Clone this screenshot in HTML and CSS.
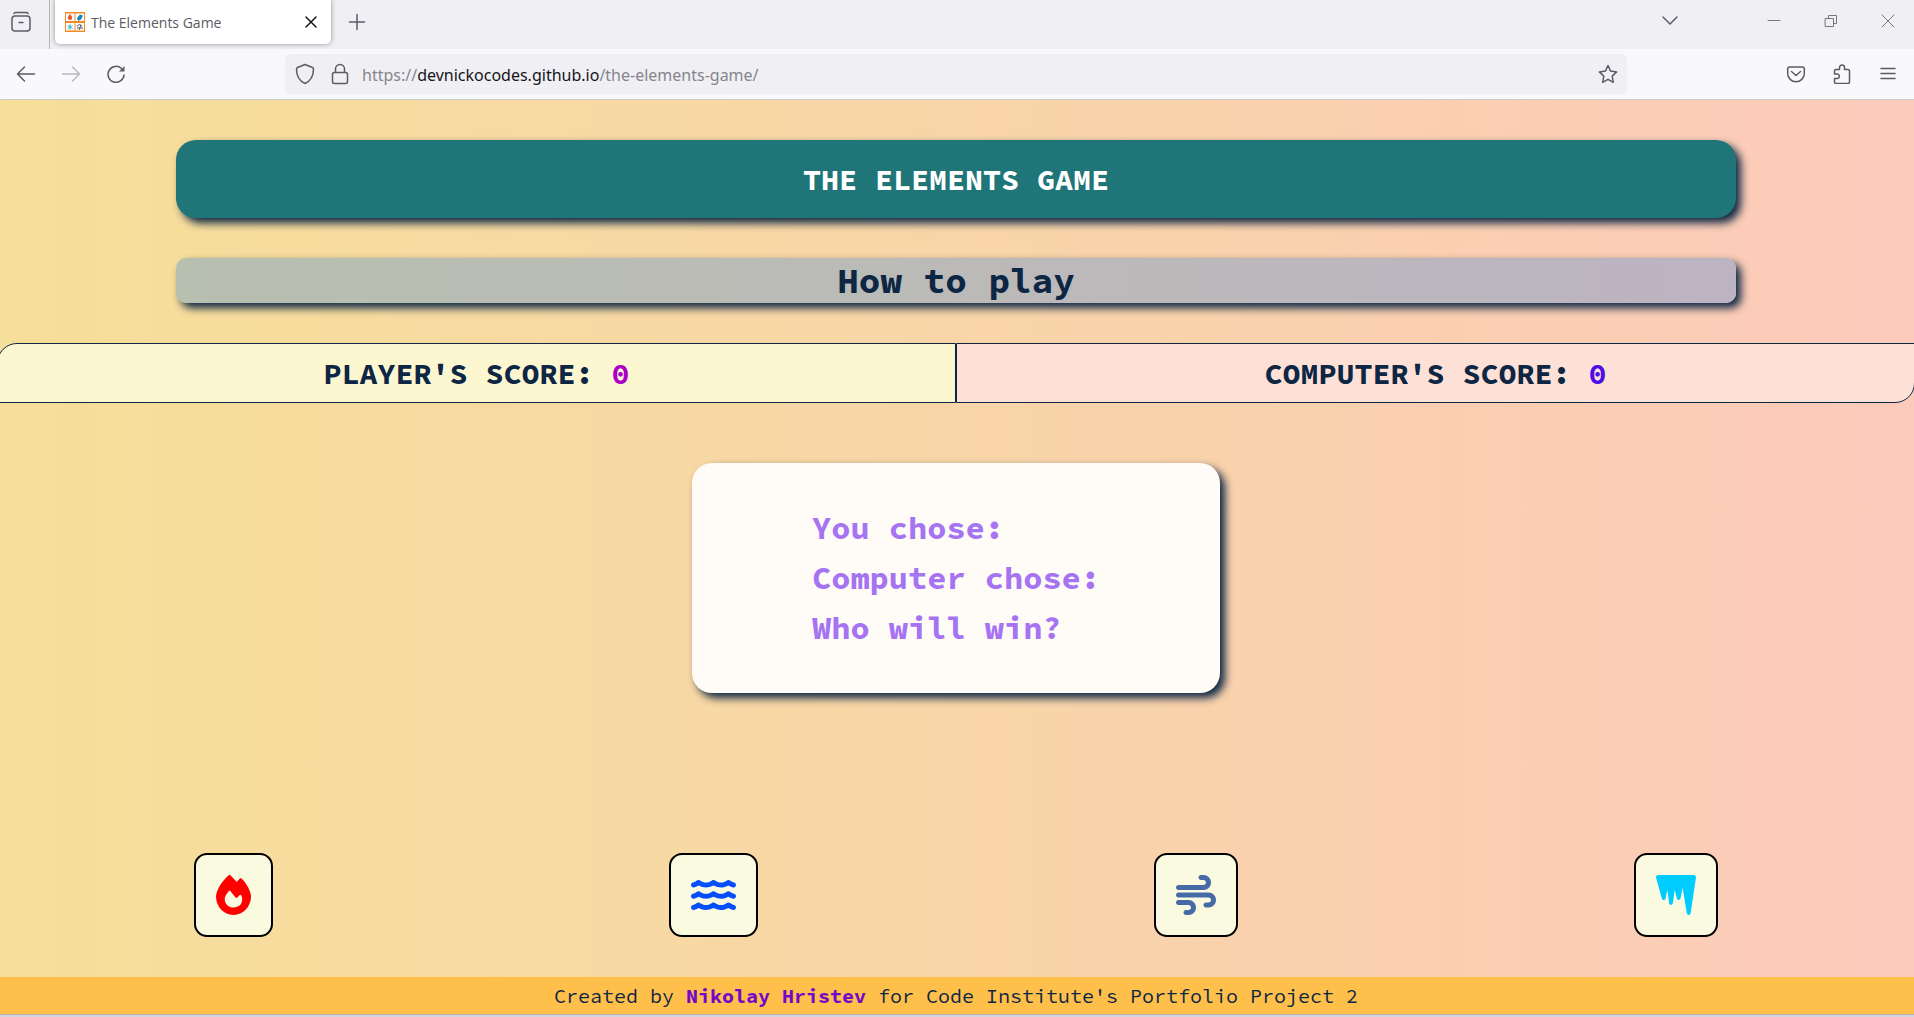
FILE: index.html
```html
<!DOCTYPE html>
<html lang="en">
<head>
<meta charset="utf-8">
<meta name="viewport" content="width=device-width, initial-scale=1">
<title>The Elements Game</title>
<link rel="stylesheet" href="styles.css">
</head>
<body>
<header class="browser">
  <div class="tab-strip">
    <button class="icon-button view-button" aria-label="Recent browsing">
      <svg width="22" height="22" viewBox="0 0 22 22" class="line bold"><path d="M4 2.500q.5-1 1.500-1h11q1 0 1.500 1"/><rect x="2" y="5" width="18" height="15" rx="3"/><path d="M9 11.500h4"/></svg>
    </button>
    <div class="tab">
      <svg width="20" height="20" viewBox="0 0 20 20"><path fill="#f58a1f" d="M0 0h20v20H0z"/><path fill="#fff" d="M1 1.500h8.500v7.500H1zM10.500 1.500H19v7.500h-8.500zM1 11h8.500v7.500H1zM10.500 11H19v7.500h-8.500z"/><path fill="#f0522b" d="M5 2q3 3 2 5-2 2-4 0-1-2 2-5z"/><path fill="#1484b8" d="M15 2.500l3 1-2 4-3 1.500-1-3z"/><path stroke="#43b5d2" d="M5 12v6M2.500 13.500l5 3M7.500 13.500l-5 3"/><path stroke="#555" fill="none" d="M12 14q3-3 5 0M12 16h6M14 18l2-5"/></svg>
      <span class="tab-title">The Elements Game</span>
      <button class="icon-button dark" aria-label="Close tab"><svg width="20" height="20" viewBox="0 0 20 20" class="line bold"><path d="M5 5l10 10M15 5L5 15"/></svg></button>
    </div>
    <button class="icon-button new-tab" aria-label="New tab"><svg width="20" height="20" viewBox="0 0 20 20" class="line bold"><path d="M10 2.500v15M2.500 10h15"/></svg></button>
    <div class="window-controls">
      <button class="icon-button all-tabs" aria-label="List all tabs"><svg width="20" height="20" viewBox="0 0 20 20" class="line bold"><path d="M3 7l7 7 7-7"/></svg></button>
      <button class="icon-button thin" aria-label="Minimize"><svg width="20" height="20" viewBox="0 0 20 20" class="line"><path d="M4 10.500h12"/></svg></button>
      <button class="icon-button thin" aria-label="Restore"><svg width="20" height="20" viewBox="0 0 20 20" class="line"><path d="M4.500 8.500h8v8h-8zM7.500 8V5.500h8v8H13"/></svg></button>
      <button class="icon-button thin" aria-label="Close window"><svg width="20" height="20" viewBox="0 0 20 20" class="line"><path d="M4 5l12 12M16 5L4 17"/></svg></button>
    </div>
  </div>
  <div class="toolbar">
    <div class="nav-buttons">
      <button class="icon-button" aria-label="Back"><svg width="20" height="20" viewBox="0 0 20 20" class="line bold"><path d="M18.500 10h-17M8.500 3l-7 7 7 7"/></svg></button>
      <button class="icon-button" aria-label="Forward" disabled><svg width="20" height="20" viewBox="0 0 20 20" class="line bold"><path d="M1.500 10h17M11.500 3l7 7-7 7"/></svg></button>
      <button class="icon-button" aria-label="Reload"><svg width="20" height="20" viewBox="0 0 20 20" class="line bold"><path d="M18 11a8 8 0 1 1-2.500-6.500"/><path d="M18.500 2v5.500H13z" fill="currentColor" stroke="none"/></svg></button>
    </div>
    <div class="address-bar">
      <svg width="20" height="22" viewBox="0 0 20 22" class="line bold"><path d="M10 1.500l7.500 3q1 .5 1 1.500c0 7-3 12-8.500 14.500C4.500 18 1.500 13 1.500 6q0-1 1-1.500z"/></svg>
      <svg width="20" height="22" viewBox="0 0 20 22" class="line bold"><rect x="2.500" y="9.500" width="15" height="11" rx="2"/><path d="M5.500 9V6a4.500 4.500 0 0 1 9 0v3"/></svg>
      <a class="address" href="https://devnickocodes.github.io/the-elements-game/">https://<span class="host">devnickocodes.github.io</span>/the-elements-game/</a>
      <button class="icon-button" aria-label="Bookmark this page"><svg width="20" height="20" viewBox="0 0 20 20" class="line bold"><path d="M10 1.500l2.600 5.600 6.100.8-4.500 4.200 1.100 6.200L10 15.300l-5.300 3 1.100-6.200L1.300 7.900l6.100-.8z"/></svg></button>
    </div>
    <div class="tools">
      <button class="icon-button" aria-label="Save to Pocket"><svg width="20" height="20" viewBox="0 0 20 20" class="line bold"><path d="M3.500 3h13q1.800 0 1.800 2v4.500a8.300 8.300 0 0 1-16.600 0V5q0-2 1.800-2z"/><path d="M5.500 7.500l4.500 4 4.500-4"/></svg></button>
      <button class="icon-button" aria-label="Extensions"><svg width="20" height="20" viewBox="0 0 20 20" class="line bold"><path d="M7.500 5.500V3.500a2.500 2.500 0 0 1 5 0v2H16q1.500 0 1.500 1.500v11q0 1.500-1.500 1.500H4Q2.500 19.500 2.500 18v-3.500H5a2.300 2.300 0 0 0 0-4.600H2.500V7Q2.500 5.500 4 5.500z"/></svg></button>
      <button class="icon-button" aria-label="Open application menu"><svg width="20" height="20" viewBox="0 0 20 20" class="line bold"><path d="M3 4.500h14M3 9.500h14M3 14.500h14"/></svg></button>
    </div>
  </div>
</header>

<main class="game">
  <h1 class="title">THE ELEMENTS GAME</h1>
  <button class="rules">How to play</button>
  <section class="scores">
    <h2 class="score player">PLAYER'S SCORE: <span class="player-points">0</span></h2>
    <h2 class="score computer">COMPUTER'S SCORE: <span class="computer-points">0</span></h2>
  </section>
  <section class="result">
    <p>You chose:</p>
    <p>Computer chose:</p>
    <p>Who will win?</p>
  </section>
  <section class="choices">
    <button class="choice fire" aria-label="Fire"><svg width="35" height="40" viewBox="0 0 448 512" fill="currentColor"><path d="M159.300 5.400c7.800-7.300 19.900-7.200 27.700.1c27.600 25.900 53.500 53.800 77.700 84c11-14.400 23.500-30.100 37-42.900c7.900-7.400 20.100-7.400 28 .1c34.600 33 63.900 76.600 84.500 118c20.300 40.800 33.800 82.500 33.800 111.900C448 404.200 348.200 512 224 512C98.400 512 0 404.100 0 276.500c0-38.400 17.800-85.300 45.400-131.700C73.300 97.700 112.700 48.600 159.300 5.400zM225.700 416c25.300 0 47.700-7 68.800-21c42.100-29.400 53.400-88.200 28.100-134.400c-4.500-9-16-9.600-22.500-2l-25.200 29.300c-6.600 7.600-18.500 7.400-24.700-.5c-16.500-21-46-58.500-62.800-79.800c-6.300-8-18.300-8.100-24.700-.1c-33.800 42.500-50.800 69.300-50.800 99.400C112 375.400 162.600 416 225.700 416z"/></svg></button>
    <button class="choice water" aria-label="Water"><svg width="45" height="40" viewBox="0 0 576 512" fill="currentColor"><defs><path id="wave" d="M269.500 69.900c11.100-7.900 25.900-7.900 37 0C329 85.400 356.500 96 384 96c26.900 0 55.400-10.800 77.400-26.100c11.900-8.500 28.100-7.800 39.200 1.700c14.400 11.900 32.500 21 50.600 25.200c17.200 4 27.900 21.200 23.900 38.400s-21.200 27.900-38.400 23.900c-24.500-5.700-44.900-16.500-58.200-25C449.500 149.700 417 160 384 160c-31.900 0-60.600-9.900-80.400-18.900c-5.800-2.700-11.100-5.300-15.600-7.700c-4.500 2.400-9.700 5.100-15.600 7.700c-19.800 9-48.500 18.900-80.400 18.900c-33 0-65.500-10.300-94.500-25.800c-13.400 8.400-33.700 19.300-58.200 25c-17.200 4-34.400-6.700-38.400-23.900s6.700-34.400 23.900-38.400C42.800 92.600 61 83.500 75.300 71.600c11.100-9.500 27.300-10.100 39.200-1.700C136.700 85.200 165.100 96 192 96c27.500 0 55-10.600 77.500-26.100z"/></defs><use href="#wave"/><use href="#wave" y="144"/><use href="#wave" y="288"/></svg></button>
    <button class="choice wind" aria-label="Wind"><svg width="40" height="40" viewBox="0 0 512 512" fill="currentColor"><path d="M288 32c0 17.700 14.300 32 32 32h32c17.700 0 32 14.300 32 32s-14.300 32-32 32H32c-17.700 0-32 14.300-32 32s14.300 32 32 32H352c53 0 96-43 96-96s-43-96-96-96H320c-17.700 0-32 14.300-32 32zm64 352c0 17.700 14.300 32 32 32h32c53 0 96-43 96-96s-43-96-96-96H32c-17.700 0-32 14.300-32 32s14.300 32 32 32H416c17.700 0 32 14.300 32 32s-14.300 32-32 32H384c-17.700 0-32 14.300-32 32zM128 512h32c53 0 96-43 96-96s-43-96-96-96H32c-17.700 0-32 14.300-32 32s14.300 32 32 32H160c17.700 0 32 14.300 32 32s-14.300 32-32 32H128c-17.700 0-32 14.300-32 32s14.300 32 32 32z"/></svg></button>
    <button class="choice ice" aria-label="Ice"><svg width="40" height="40" viewBox="0 0 512 512" fill="currentColor"><path d="M76 305L1 36C-4 16 10 0 29 0H483C502 0 515 16 511 35L443 490c-4 29-44 29-49 0L341 162 313 301c-6 25-40 25-46 0L239 192 215 366c-6 24-40 24-46 0L145 192 121 305c-7 21-38 21-45 0z"/></svg></button>
  </section>
</main>
<footer class="credits">Created by <a href="#" class="author">Nikolay Hristev</a> for Code Institute's Portfolio Project 2</footer>
<div class="window-edge"></div>
</body>
</html>
```
FILE: styles.css
```css
* {
  box-sizing: border-box;
}

body {
  margin: 0;
  min-height: 100vh;
  display: flex;
  flex-direction: column;
  overflow-x: hidden;
  color: #0d2644;
  font-family: "Source Code Pro", "Liberation Mono", monospace;
}

h1, h2, p {
  margin: 0;
}

button {
  font: inherit;
  color: inherit;
}

svg {
  display: block;
  flex: none;
}

.line {
  fill: none;
  stroke: currentColor;
  stroke-width: 1;
  stroke-linecap: round;
  stroke-linejoin: round;
}

.line.bold {
  stroke-width: 1.5;
}

/* Browser window */
.browser {
  color: #5b5b66;
  font-family: "Segoe UI", "Open Sans", sans-serif;
  border-bottom: 1px solid #cccccf;
}

.icon-button {
  display: flex;
  padding: 0;
  border: 0;
  background: none;
}

.icon-button:disabled {
  opacity: 0.4;
}

.icon-button.dark {
  color: #15141a;
}

.icon-button.thin {
  color: #777;
}

.tab-strip {
  display: flex;
  height: 49px;
  background: #f0f0f4;
}

.view-button {
  width: 50px;
  padding: 11px 0 0 10px;
  border-right: 1px solid #b5b5bb;
}

.tab {
  display: flex;
  align-items: center;
  gap: 6px;
  width: 276px;
  height: 44px;
  margin-left: 5px;
  padding: 0 10px;
  border-radius: 0 0 5px 5px;
  background: #fff;
  box-shadow: 0 0 5px rgba(0, 0, 0, 0.4);
}

.tab-title {
  flex: 1;
  font-size: 14px;
}

.new-tab {
  height: 44px;
  align-items: center;
  margin-left: 16px;
}

.window-controls {
  display: flex;
  align-items: center;
  gap: 37px;
  height: 40px;
  margin-left: auto;
  padding-right: 16px;
}

.all-tabs {
  margin-right: 47px;
}

.toolbar {
  display: flex;
  align-items: center;
  height: 50px;
  padding: 0 16px;
  background: #f9f9fb;
}

.nav-buttons {
  display: flex;
  gap: 25px;
  width: 269px;
}

.address-bar {
  flex: 1;
  display: flex;
  align-items: center;
  gap: 12px;
  height: 40px;
  padding: 0 9px 0 10px;
  border-radius: 5px;
  background: #f0f0f4;
}

.address-bar > svg + svg {
  margin-left: 3px;
}

.address {
  flex: 1;
  padding-top: 2px;
  color: #85858c;
  font-family: "Segoe UI", "Noto Sans", sans-serif;
  font-size: 16px;
  text-decoration: none;
}

.host {
  color: #15141a;
}

.tools {
  display: flex;
  gap: 26px;
  margin-left: 159px;
}

/* Game */
.game {
  flex: 1;
  display: flex;
  flex-direction: column;
  align-items: center;
  padding: 40px 2px 40px 0;
  background: linear-gradient(to right, #f6df99, #f9d3ab 60%, #fccabb);
}

.title,
.rules {
  width: 1560px;
  max-width: 82%;
  text-align: center;
  font-weight: 700;
  box-shadow: 5px 5px 8px #0d2644;
}

.title {
  padding: 20px;
  border-radius: 20px;
  background: #1f7577;
  color: #fff;
  font-size: 30px;
  line-height: 38px;
}

.rules {
  margin-top: 40px;
  padding: 0;
  border: 0;
  border-radius: 10px;
  background: linear-gradient(to right, #b7bfb0, #bbbab8 50%, #bcb4c2);
  font-size: 36px;
  line-height: 45px;
}

.scores {
  align-self: stretch;
  display: flex;
  margin: 40px -3px 0;
}

.score {
  flex: 1;
  padding: 10px;
  border: 1px solid #0d2644;
  text-align: center;
  font-size: 30px;
  line-height: 38px;
}

.player {
  border-radius: 20px 0 0 0;
  background: #fcf7d1;
}

.computer {
  border-radius: 0 0 20px 0;
  background: #fde0d6;
}

.player-points {
  color: #a800c4;
}

.computer-points {
  color: #4b0ee6;
}

.result {
  margin: 60px 0 40px;
  padding: 40px 120px;
  border-radius: 20px;
  background: #fffbf6;
  box-shadow: 5px 5px 8px #0d2644;
  color: #a674f2;
  font-size: 32px;
  font-weight: 700;
  line-height: 50px;
}

.choices {
  align-self: stretch;
  display: flex;
  justify-content: space-between;
  margin-top: auto;
  padding: 0 194px;
}

.choice {
  padding: 20px;
  border: 2px solid #000;
  border-radius: 13px;
  background: #fafae1;
}

.fire {
  color: #f00;
}

.water {
  color: #054ffa;
}

.wind {
  color: #466aa5;
}

.ice {
  color: #0cf;
}

.credits {
  padding: 6px 2px 6px 0;
  background: #ffbf4b;
  text-align: center;
  font-size: 20px;
  line-height: 25px;
}

.author {
  color: #7409c9;
  font-weight: 700;
  text-decoration: none;
}

.window-edge {
  height: 3px;
  border-top: 1px solid #b0b0b5;
  background: #d5d5df;
}
```
